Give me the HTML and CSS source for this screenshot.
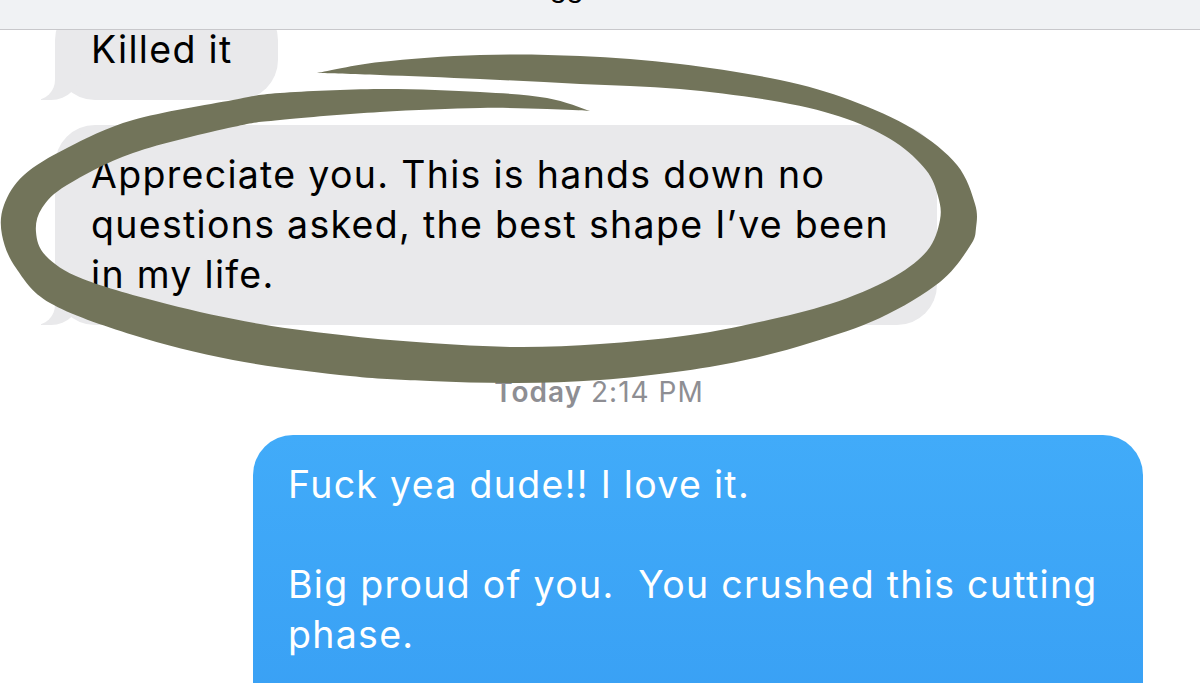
FILE: index.html
```html
<!DOCTYPE html>
<html lang="en">

<head>
    <meta charset="UTF-8">
    <meta name="viewport" content="width=device-width, initial-scale=1.0">
    <title>Messages</title>
    <link rel="stylesheet" href="styles.css">
</head>

<body>
    <header class="nav">
        <span class="nav-title">Maggie</span>
    </header>

    <main class="thread">
        <p class="bubble them">Killed it</p>
        <p class="bubble them wide">Appreciate you. This is hands down no<br>questions asked, the best shape I’ve been<br>in my life.</p>
        <p class="stamp"><b>Today</b> 2:14 PM</p>
        <p class="bubble me">Fuck yea dude!! I love it.<br><br>Big proud of you.&nbsp; You crushed this cutting<br>phase.</p>
    </main>

    <!-- hand drawn circle over the message -->
    <svg class="scribble" width="1200" height="683" viewBox="0 0 1200 683">
        <path fill="#72745a" d="M317 73 C327.5 71.2 352.8 65 380 62 S446.7 56 480 55 S546.7 54.5 580 56 S646.7 60 680 64 S751.7 74 780 80 S827.8 91.8 850 100 S895.2 118.2 913 129 S946.7 152.5 957 165 S971.8 193.5 975 204 S976.8 221 976 228 S976 237 970 246 S955 270 940 282 S901.2 308 880 318 S834.7 335.2 813 342 S771.7 354.2 750 359 S708 367.5 683 371 S627.7 378 600 380 S545.3 382.8 517 383 S457.8 382.2 430 381 S382.8 379.5 350 376 S269.2 366.8 233 360 S163.5 344.5 133 335 S69.5 314.2 50 303 S24 279.3 16 268 S4 245.5 2 235 S0.3 215 4 205 S13.5 184.5 24 175 S48.8 157.2 67 148 S105.3 128 133 120 S208.5 104.5 233 100 S255.5 94.8 280 93 S346.7 89.2 380 89 S452.2 90.5 480 92 S528.7 94.8 547 98 S582.8 108.8 590 111 C582.8 110.7 565.3 109.5 547 109 S507.8 107.5 480 108 S413.3 110 380 112 S304.5 117.5 280 120 S257.5 121.5 233 127 S160.7 143.3 133 153 S82.2 175.8 67 185 S47.2 200.2 42 208 S35.3 224 36 232 S38.2 248.2 46 256 S62.8 271 83 279 S137.5 296.5 167 304 S229.5 318.7 260 324 S321.7 332.8 350 336 S402.2 341.2 430 343 S488.7 346.8 517 347 S572.3 345.8 600 344 S658 339.3 683 336 S725.5 329.3 750 324 S806.7 311.5 830 304 S873.8 287.8 890 279 S918.7 260.8 927 251 S938.2 229.2 940 220 S940.3 204.3 938 196 S933.2 179 926 170 S908.2 150.5 895 142 S866.2 125.7 847 119 S807.8 107 780 102 S713.3 92 680 89 S613.3 85.7 580 84 S513.3 80.5 480 79 S407.2 76 380 75 S327.5 73.3 317 73 Z" />
    </svg>
</body>

</html>
```

FILE: styles.css
```css
body {
    margin: 0;
    height: 683px;
    overflow: hidden;
    background: #fff;
    font-family: Inter, "Noto Sans", sans-serif;
}

.nav {
    position: fixed;
    top: 0;
    left: 0;
    right: 0;
    height: 29px;
    overflow: hidden;
    z-index: 2;
    text-align: center;
    background: #f0f2f4;
    border-bottom: 1px solid #c8c8cb;
}

.nav-title {
    display: block;
    margin-top: -27px;
    padding-right: 84px;
    font-size: 27px;
    line-height: 30px;
    color: #000;
}

.thread {
    display: flex;
    flex-direction: column;
    padding: 0 57px 0 55px;
}

.bubble {
    position: relative;
    margin: 0;
    padding: 25px 46px 25px 36px;
    border-radius: 40px;
    font-size: 37.5px;
    line-height: 50px;
    letter-spacing: 1.3px;
    white-space: nowrap;
}

.them {
    align-self: flex-start;
    margin-bottom: 25px;
    background: #e9e9eb;
    color: #000;
}

.them::before {
    content: "";
    position: absolute;
    left: -14px;
    bottom: 0;
    width: 40px;
    height: 40px;
    background: #e9e9eb;
    border-bottom-right-radius: 30px;
}

.them::after {
    content: "";
    position: absolute;
    left: -52px;
    bottom: 0;
    width: 52px;
    height: 40px;
    background: #fff;
    border-bottom-right-radius: 20px;
}

.wide {
    width: 800px;
    margin-bottom: 0;
}

.stamp {
    margin: 47px 0 23px;
    text-align: center;
    font-size: 28px;
    line-height: 40px;
    letter-spacing: 1px;
    color: #8e8e93;
}

.stamp b {
    font-weight: 600;
}

.me {
    align-self: flex-end;
    width: 820px;
    padding: 25px 35px 80px;
    color: #fff;
    background: linear-gradient(#41abf9, #389ff4);
}

.scribble {
    position: absolute;
    top: 0;
    left: 0;
    z-index: 1;
    pointer-events: none;
}
```
